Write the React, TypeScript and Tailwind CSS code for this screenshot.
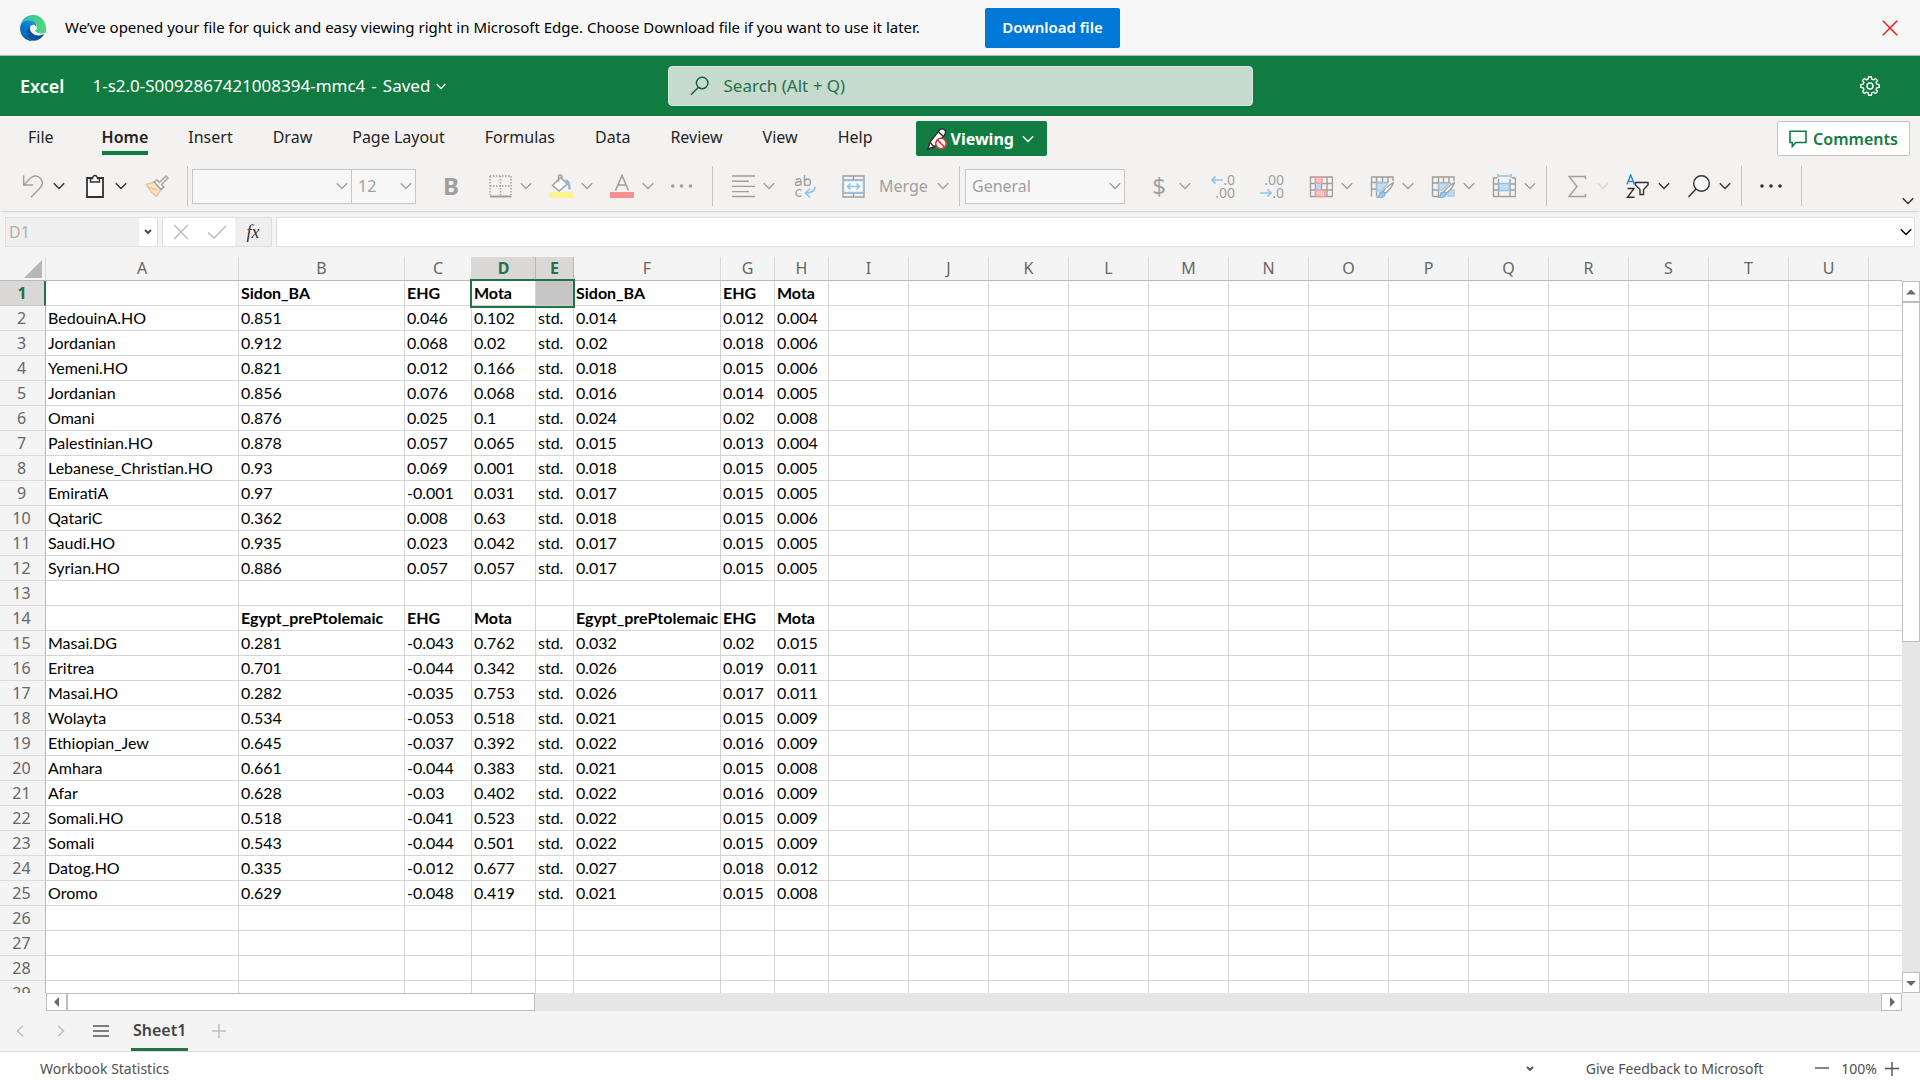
import React from "react";

type IconProps = { children: React.ReactNode; className?: string };

function Icon({ children, className = "text-[#a19f9d]" }: IconProps) {
  return (
    <svg viewBox="0 0 24 24" fill="none" stroke="currentColor" strokeWidth="1.4" aria-hidden="true" className={`h-6 w-6 shrink-0 ${className}`}>
      {children}
    </svg>
  );
}

function Chevron({ className = "text-[#a19f9d]" }: { className?: string }) {
  return (
    <svg viewBox="0 0 12 8" fill="none" stroke="currentColor" strokeWidth="1.4" aria-hidden="true" className={`h-2 w-3 shrink-0 ${className}`}>
      <path d="M.8 1.2 6 6.6 11.2 1.2" />
    </svg>
  );
}

type ToolProps = { label: string; children: React.ReactNode; menu?: boolean; tone?: string; className?: string };

function Tool({ label, children, menu, tone, className = "" }: ToolProps) {
  return (
    <button type="button" aria-label={label} className={`flex h-10 shrink-0 items-center gap-2 ${className}`}>
      {children}
      {menu && <Chevron className={tone} />}
    </button>
  );
}

function Separator({ className = "" }: { className?: string }) {
  return <div className={`h-10 w-px shrink-0 bg-[#c8c6c4] ${className}`} />;
}

function Dropdown({ label, value, className }: { label: string; value: string; className: string }) {
  return (
    <div className={`relative h-[35px] shrink-0 ${className}`}>
      <select aria-label={label} className="h-full w-full appearance-none border border-[#c8c6c4] bg-[#f7f7f7] pl-1.5 text-base text-[#a19f9d]">
        <option>{value}</option>
      </select>
      <span className="pointer-events-none absolute inset-y-0 right-1 flex items-center">
        <Chevron />
      </span>
    </div>
  );
}

function EdgeLogo() {
  return (
    <svg viewBox="0 0 256 256" className="h-[26px] w-[26px] shrink-0" role="img" aria-label="Microsoft Edge">
      <defs>
        <linearGradient id="edge-dark" x1="60" y1="177" x2="240" y2="177" gradientUnits="userSpaceOnUse">
          <stop offset="0" stopColor="#0c59a4" />
          <stop offset="1" stopColor="#114a8b" />
        </linearGradient>
        <linearGradient id="edge-blue" x1="157" y1="96" x2="46" y2="230" gradientUnits="userSpaceOnUse">
          <stop offset="0" stopColor="#1b8fdc" />
          <stop offset=".4" stopColor="#0a7bd0" />
          <stop offset="1" stopColor="#0667b4" />
        </linearGradient>
        <linearGradient id="edge-green" x1="20" y1="80" x2="240" y2="110" gradientUnits="userSpaceOnUse">
          <stop offset="0" stopColor="#2fb6b4" />
          <stop offset=".35" stopColor="#3cc99a" />
          <stop offset="1" stopColor="#4fd67c" />
        </linearGradient>
      </defs>
      <path fill="url(#edge-dark)" d="M231 190a94 94 0 0 1-10 5 102 102 0 0 1-36 6c-47 0-88-32-88-74a31 31 0 0 1 16-27c-43 2-54 46-54 72 0 74 68 81 82 81 8 0 20-2 28-4l1-1a128 128 0 0 0 66-53 4 4 0 0 0-5-5z" />
      <path fill="url(#edge-blue)" d="M106 241a79 79 0 0 1-23-21 81 81 0 0 1 30-120c3-2 8-4 16-4a32 32 0 0 1 25 13 32 32 0 0 1 6 19c0-1 25-80-80-80C36 48 0 90 0 130a130 130 0 0 0 12 56 128 128 0 0 0 157 67 76 76 0 0 1-63-8z" />
      <path fill="url(#edge-green)" d="M152 149c0 1-3 3-3 7 0 4 2 8 7 11 23 16 66 14 66 14a61 61 0 0 0 31-9 64 64 0 0 0 3-44c0-29-10-48-14-56C212 16 169 0 128 0A128 128 0 0 0 0 126c0-40 39-72 84-72 4 0 25 0 44 10 17 9 26 20 32 30a63 63 0 0 1 8 30c0 14-7 22-16 25z" />
    </svg>
  );
}

const tabs = ["File", "Home", "Insert", "Draw", "Page Layout", "Formulas", "Data", "Review", "View", "Help"];

const columns = "ABCDEFGHIJKLMNOPQRSTU".split("");

const columnWidths = [
  "w-[193px]", "w-[166px]", "w-[67px]", "w-[64px]", "w-[38px]", "w-[147px]", "w-[54px]", "w-[54px]",
  "w-20", "w-20", "w-20", "w-20", "w-20", "w-20", "w-20", "w-20", "w-20", "w-20", "w-20", "w-20", "w-20",
];

const cells: string[][] = [
  ["", "Sidon_BA", "EHG", "Mota", "", "Sidon_BA", "EHG", "Mota"],
  ["BedouinA.HO", "0.851", "0.046", "0.102", "std.", "0.014", "0.012", "0.004"],
  ["Jordanian", "0.912", "0.068", "0.02", "std.", "0.02", "0.018", "0.006"],
  ["Yemeni.HO", "0.821", "0.012", "0.166", "std.", "0.018", "0.015", "0.006"],
  ["Jordanian", "0.856", "0.076", "0.068", "std.", "0.016", "0.014", "0.005"],
  ["Omani", "0.876", "0.025", "0.1", "std.", "0.024", "0.02", "0.008"],
  ["Palestinian.HO", "0.878", "0.057", "0.065", "std.", "0.015", "0.013", "0.004"],
  ["Lebanese_Christian.HO", "0.93", "0.069", "0.001", "std.", "0.018", "0.015", "0.005"],
  ["EmiratiA", "0.97", "-0.001", "0.031", "std.", "0.017", "0.015", "0.005"],
  ["QatariC", "0.362", "0.008", "0.63", "std.", "0.018", "0.015", "0.006"],
  ["Saudi.HO", "0.935", "0.023", "0.042", "std.", "0.017", "0.015", "0.005"],
  ["Syrian.HO", "0.886", "0.057", "0.057", "std.", "0.017", "0.015", "0.005"],
  [],
  ["", "Egypt_prePtolemaic", "EHG", "Mota", "", "Egypt_prePtolemaic", "EHG", "Mota"],
  ["Masai.DG", "0.281", "-0.043", "0.762", "std.", "0.032", "0.02", "0.015"],
  ["Eritrea", "0.701", "-0.044", "0.342", "std.", "0.026", "0.019", "0.011"],
  ["Masai.HO", "0.282", "-0.035", "0.753", "std.", "0.026", "0.017", "0.011"],
  ["Wolayta", "0.534", "-0.053", "0.518", "std.", "0.021", "0.015", "0.009"],
  ["Ethiopian_Jew", "0.645", "-0.037", "0.392", "std.", "0.022", "0.016", "0.009"],
  ["Amhara", "0.661", "-0.044", "0.383", "std.", "0.021", "0.015", "0.008"],
  ["Afar", "0.628", "-0.03", "0.402", "std.", "0.022", "0.016", "0.009"],
  ["Somali.HO", "0.518", "-0.041", "0.523", "std.", "0.022", "0.015", "0.009"],
  ["Somali", "0.543", "-0.044", "0.501", "std.", "0.022", "0.015", "0.009"],
  ["Datog.HO", "0.335", "-0.012", "0.677", "std.", "0.027", "0.018", "0.012"],
  ["Oromo", "0.629", "-0.048", "0.419", "std.", "0.021", "0.015", "0.008"],
  [], [], [], [],
];

function Banner() {
  return (
    <div className="flex h-14 shrink-0 items-center border-b border-[#b8b8b8] bg-[#f7f7f7] pr-[22px] pl-5">
      <EdgeLogo />
      <p className="ml-[19px] w-[880px] text-[15px] whitespace-nowrap text-black">
        We’ve opened your file for quick and easy viewing right in Microsoft Edge. Choose Download file if you want to use it later.
      </p>
      <button type="button" className="ml-10 h-10 w-[135px] shrink-0 rounded-xs bg-[#0078d7] text-[15px] font-semibold text-white">
        Download file
      </button>
      <button type="button" aria-label="Close" className="ml-auto text-[#f01818]">
        <svg viewBox="0 0 16 16" fill="none" stroke="currentColor" strokeWidth="1.4" className="h-4 w-4">
          <path d="m.8.8 14.4 14.4M15.2.8.8 15.2" />
        </svg>
      </button>
    </div>
  );
}

function TitleBar() {
  return (
    <header className="grid h-[60px] shrink-0 grid-cols-[1fr_585px_1fr] items-center bg-[#107c41] text-white">
      <div className="flex items-center pl-5">
        <span className="text-lg font-semibold">Excel</span>
        <button type="button" className="ml-7 flex items-center gap-1.5 text-[17px] whitespace-nowrap">
          <span>1-s2.0-S0092867421008394-mmc4</span>
          <span>-</span>
          <span>Saved</span>
          <svg viewBox="0 0 10 7" fill="none" stroke="currentColor" strokeWidth="1.3" className="h-[7px] w-2.5">
            <path d="M.7 1 5 5.6 9.3 1" />
          </svg>
        </button>
      </div>
      <label className="flex h-10 items-center rounded-sm border border-[#d5e6dc] bg-[#c5dbce] pl-[21px] text-[#185c37]">
        <svg viewBox="0 0 20 20" fill="none" stroke="currentColor" strokeWidth="1.4" className="h-5 w-5 shrink-0">
          <circle cx="12.2" cy="7" r="5.8" />
          <path d="M8.2 11.4 1 18.8" />
        </svg>
        <input type="text" placeholder="Search (Alt + Q)" aria-label="Search" className="ml-3.5 w-full bg-transparent text-[17px] outline-none placeholder:text-[#2a6f49]" />
      </label>
      <button type="button" aria-label="Settings" className="mr-10 justify-self-end">
        <svg viewBox="0 0 20 20" fill="none" stroke="currentColor" strokeWidth="1.4" strokeLinejoin="round" className="h-5 w-5">
          <path d="M8.2 3.1 8.6.8h2.8l.4 2.3 1.8.8 1.9-1.4 2 2-1.4 1.9.8 1.8 2.3.4v2.8l-2.3.4-.8 1.8 1.4 1.9-2 2-1.9-1.4-1.8.8-.4 2.3H8.6l-.4-2.3-1.8-.8-1.9 1.4-2-2 1.4-1.9-.8-1.8-2.3-.4V8.6l2.3-.4.8-1.8-1.4-1.9 2-2 1.9 1.4z" />
          <circle cx="10" cy="10" r="3" />
        </svg>
      </button>
    </header>
  );
}

function TabStrip() {
  return (
    <div className="flex items-start pt-[5px] pr-2.5 pl-7">
      <nav className="flex gap-10">
        {tabs.map((tab) => (
          <button
            key={tab}
            type="button"
            className={
              tab === "Home"
                ? "ml-2 border-b-4 border-[#107c41] pt-0.5 text-base leading-7 font-semibold text-[#252423]"
                : "border-b-4 border-transparent pt-0.5 text-base leading-7 whitespace-nowrap text-[#252423]"
            }
          >
            {tab}
          </button>
        ))}
      </nav>
      <button type="button" className="ml-11 flex h-[35px] w-[131px] items-center rounded-xs bg-[#107c41] pl-2.5 text-white">
        <svg viewBox="0 0 22 24" className="h-6 w-[22px]" aria-hidden="true">
          <path d="M2 22 4 15 14 2.5q3-2 5.500 1.500Q20 6 18.500 8L8 20z" fill="#fff" stroke="#333" strokeWidth="1.500" />
          <path d="m4 15 4 5M12.500 5l4.500 4" stroke="#333" strokeWidth="1.500" />
          <circle cx="15" cy="16.500" r="5.200" fill="#fff" stroke="#d83b3b" strokeWidth="1.600" />
          <path d="m11.400 12.900 7.200 7.200" stroke="#d83b3b" strokeWidth="1.600" />
        </svg>
        <span className="ml-0.5 text-base font-bold">Viewing</span>
        <Chevron className="ml-2 text-white" />
      </button>
      <button type="button" className="ml-auto flex h-[35px] w-[133px] items-center justify-center gap-1.5 rounded-xs border border-[#c8c6c4] bg-white text-base font-semibold text-[#107c41]">
        <svg viewBox="0 0 18 18" fill="none" stroke="currentColor" strokeWidth="1.600" className="h-[18px] w-[18px] shrink-0" aria-hidden="true">
          <path d="M1 1.300h16v11.200H6.800L3.300 16.500v-4H1z" />
        </svg>
        <span>Comments</span>
      </button>
    </div>
  );
}

const dark = "text-[#323130]";

function Toolbar() {
  return (
    <div className="flex items-center pt-2.5 pr-1.5 pb-[5px] pl-[21px]">
      <div className="flex items-center gap-[18px]">
        <Tool label="Undo" menu tone={dark}>
          <Icon>
            <path d="M2.700 1.500V11h9.500M3 10.800l6-6.300C12.500 1 17 1.500 19.500 4.500S22 11 19 14L10 23.200" />
          </Icon>
        </Tool>
        <Tool label="Paste" menu tone={dark}>
          <Icon className={dark}>
            <path fill="#fafafa" d="M4 4h16v19H4z" strokeWidth="1.800" />
            <path fill="#fafafa" d="M7.500 8V4.500H9.500Q10 1.500 12 1.500T14.500 4.500H16.500V8z" />
          </Icon>
        </Tool>
        <Tool label="Format Painter">
          <Icon>
            <path fill="#fbe3cd" stroke="#f0c197" d="M1.500 10.500 9 8l7 7.500-4.500 6.700Q5 18 1.500 10.500zM3 13l9 3" />
            <path fill="#fafafa" d="m9 8 3-2 2.500 2.500 6.500-6.500 2 2-6.500 6.500L19 13l-3 2.500z" />
          </Icon>
        </Tool>
        <Separator />
      </div>
      <div className="ml-1 flex">
        <Dropdown label="Font" value="" className="w-40" />
        <Dropdown label="Font size" value="12" className="-ml-px w-[65px]" />
      </div>
      <Tool label="Bold" className="ml-[23px] w-6 justify-center text-2xl font-bold text-[#a19f9d]">B</Tool>
      <div className="ml-[25px] flex items-center gap-[17px]">
        <Tool label="Borders" menu>
          <Icon>
            <path strokeDasharray="1.500 1.500" d="M2 2h21M2 12h21M2 2v19M12.500 2v19M23 2v19" />
            <path d="M2 22.500h21.500" strokeWidth="2" />
          </Icon>
        </Tool>
        <Tool label="Fill Color" menu>
          <Icon>
            <path fill="#fafafa" d="m3.500 11.500 8-8 7 6.500-8.500 7z" />
            <path d="M9.500 7.500V2q2-2.500 3.500 0v3.500" />
            <path d="M16.500 6.500q4 0 4 9" stroke="#8cbbe0" strokeWidth="2.500" />
            <path fill="#fbf58f" stroke="none" d="M0 18h24v6H0z" />
          </Icon>
        </Tool>
        <Tool label="Font Color" menu>
          <Icon>
            <path d="m5.500 16.500 6.500-15 6.500 15M8 11h8" strokeWidth="1.600" />
            <path fill="#f98f8f" stroke="none" d="M0 18h24v6H0z" />
          </Icon>
        </Tool>
        <Tool label="More font options">
          <Icon>
            <g fill="currentColor" stroke="none"><circle cx="1.800" cy="12" r="1.800" /><circle cx="10.500" cy="12" r="1.800" /><circle cx="19.500" cy="12" r="1.800" /></g>
          </Icon>
        </Tool>
        <Separator />
      </div>
      <Tool label="Align" menu className="ml-[18px]">
        <Icon><path d="M1 2h23M1 7.200h17M1 12.400h23M1 17.600h17M1 22.500h23" /></Icon>
      </Tool>
      <Tool label="Wrap Text" className="ml-[18px]">
        <Icon>
          <path d="M3 5.500Q8 3.500 8 7v4.500M8 7.500Q2.500 7.500 2.500 10t5.500.5M11.500 1v10.500M11.500 8q0-3 3-3t3 3.300-3 3.300-3-3.300M8.500 16q-5.500-1.500-5.500 3t5.500 3" />
          <path d="M22 13q0 6-9.500 6m4.500-4.500-4.500 4.500 4.500 4.500" stroke="#8fc5e8" strokeWidth="1.700" />
        </Icon>
      </Tool>
      <Tool label="Merge" menu className="ml-6">
        <Icon>
          <path d="M2 2h21v21H2zM12.500 2v4M12.500 18v5M2 6h21M2 19h21" />
          <path fill="#fafafa" stroke="#8fc5e8" d="M2.500 6.500h20v12h-20z" />
          <path d="M6.500 12.500h12M9.500 9.500l-3 3 3 3M15.500 9.500l3 3-3 3" stroke="#8fc5e8" strokeWidth="1.600" />
        </Icon>
        <span className="ml-1.5 w-[50px] text-left text-base text-[#a19f9d]">Merge</span>
      </Tool>
      <Separator className="ml-2.5" />
      <Dropdown label="Number Format" value="General" className="ml-[5px] w-40" />
      <Tool label="Currency" menu className="ml-[22px] text-2xl text-[#a19f9d]">
        <span className="w-6 text-center">$</span>
      </Tool>
      <Tool label="Increase Decimal" className="ml-5 w-6 justify-end">
        <span className="flex flex-col items-end text-sm leading-[13px] text-[#a19f9d]">
          <span className="flex items-center">
            <svg viewBox="0 0 12 8" fill="none" stroke="#8fc5e8" strokeWidth="1.600" className="h-2 w-3"><path d="M1 4h11M4.500.500 1 4l3.500 3.500" /></svg>
            .0
          </span>
          <span>.00</span>
        </span>
      </Tool>
      <Tool label="Decrease Decimal" className="ml-[25px] w-6 justify-end">
        <span className="flex flex-col items-end text-sm leading-[13px] text-[#a19f9d]">
          <span>.00</span>
          <span className="flex items-center">
            <svg viewBox="0 0 12 8" fill="none" stroke="#8fc5e8" strokeWidth="1.600" className="h-2 w-3"><path d="M0 4h11M7.500.500 11 4 7.500 7.500" /></svg>
            .0
          </span>
        </span>
      </Tool>
      <div className="ml-[25px] flex items-center gap-[17px]">
        <Tool label="Conditional Formatting" menu>
          <Icon>
            <path d="M1.500 3h22v19.500h-22zM6.500 3v19.500M12.500 3v19.500M18 3v19.500M1.500 9.500h22M1.500 16h22" />
            <path fill="#fbc5c5" stroke="#f19a9a" d="M6.500 3H13v6.500H6.500zM6.500 16h9.500v6.500H6.500z" />
            <path fill="#b9dbf3" stroke="none" d="M7 10h5v5.500H7z" />
          </Icon>
        </Tool>
        <Tool label="Format As Table" menu>
          <Icon>
            <path d="M1.500 22.500V3h21.500v4M6.500 3v19.500M1.500 8.500H18M1.500 15h6M12.500 3v5.500M18 3v5.500" />
            <path fill="#c3ddf3" stroke="#a5cbe8" d="M7 9h11l-7 8H7z" />
            <path fill="#fafafa" d="M23.500 8.500q-7 4-10.500 9l2 2q6-4.500 8.500-11z" />
            <path fill="#a5cbe8" stroke="#7fb2dc" d="M12.500 18q3.500 1 2 3.500T6.500 24q3-1.500 3-3.500t3-2.500z" />
          </Icon>
        </Tool>
        <Tool label="Cell Styles" menu>
          <Icon>
            <path d="M1.500 22.500V3h21.500v4M7.500 3v19.500M1.500 9H20M1.500 16h6M12.500 3v6M18 3v6M1.500 22.500h6" />
            <path fill="#c3ddf3" stroke="#a5cbe8" d="M8 9.500h10l-7 6.500H8zM17 16h6v6h-6z" />
            <path fill="#fafafa" d="M23.500 8.500q-7 4-10.500 9l2 2q6-4.500 8.500-11z" />
            <path fill="#a5cbe8" stroke="#7fb2dc" d="M12.500 18q3.500 1 2 3.500T6.500 24q3-1.500 3-3.500t3-2.500z" />
          </Icon>
        </Tool>
        <Tool label="Insert Cells" menu>
          <Icon>
            <path d="M5 4H1.500v18.500h22V4H20M6.500 5v17.500M18 5v17.500M1.500 10h22M1.500 16h22" />
            <path fill="#c3ddf3" stroke="#8fc5e8" d="M7 9.500h10.500v7H7z" />
            <path d="M6 2h13M6 0v4M19 0v4" stroke="#8fc5e8" strokeWidth="1.600" />
          </Icon>
        </Tool>
      </div>
      <Separator className="ml-2.5" />
      <Tool label="AutoSum" menu tone="text-[#dad8d6]" className="ml-[18px]">
        <Icon><path d="M20.500 5V2.500H4l8 10-8 10h16.500V20" /></Icon>
      </Tool>
      <Tool label="Sort and Filter" menu tone={dark} className="ml-[17px]">
        <Icon className={dark}>
          <path d="m1 10.500 3.700-9.500 3.700 9.500M2.300 7.500h4.800" stroke="#1e88d2" />
          <path d="M1.500 14.500h6.500l-6.500 8.800h7" />
          <path fill="#fafafa" d="M9.500 8.500H22V11l-4.500 4.500v5h-3.500v-5L9.500 11z" />
        </Icon>
      </Tool>
      <Tool label="Find" menu tone={dark} className="ml-[17px]">
        <Icon className={dark}>
          <circle cx="14.500" cy="9.500" r="7.800" fill="#fafafa" />
          <path d="M9 15 1.500 23" />
        </Icon>
      </Tool>
      <Separator className="ml-2.5" />
      <Tool label="More Options" className="ml-[17px]">
        <Icon className={dark}>
          <g fill="currentColor" stroke="none"><circle cx="3" cy="12" r="1.800" /><circle cx="12" cy="12" r="1.800" /><circle cx="21" cy="12" r="1.800" /></g>
        </Icon>
      </Tool>
      <Separator className="ml-[18px]" />
      <button type="button" aria-label="Ribbon display options" className="ml-auto self-end pb-px">
        <Chevron className={dark} />
      </button>
    </div>
  );
}

function FormulaBar() {
  return (
    <div className="flex h-[46px] shrink-0 items-start pt-1.5 pr-[5px] pl-[5px]">
      <div className="flex h-[30px] w-[153px] shrink-0 border border-[#e1dfdd] bg-[#efefef]">
        <input aria-label="Name Box" defaultValue="D1" className="w-0 flex-1 pl-[3px] text-base text-[#b3b0ad] outline-none" />
        <button type="button" aria-label="Name Box options" className="flex w-[18px] items-center justify-center bg-white text-[#444]">
          <svg viewBox="0 0 8 6" fill="none" stroke="currentColor" strokeWidth="1.800" className="h-1.5 w-2"><path d="m1 1 3 3 3-3" /></svg>
        </button>
      </div>
      <div className="ml-1 flex h-[30px] shrink-0 border border-[#e1dfdd] bg-white">
        <button type="button" aria-label="Cancel" className="flex w-9 items-center justify-center text-[#b8b6b4]">
          <svg viewBox="0 0 16 16" fill="none" stroke="currentColor" strokeWidth="1.300" className="h-4 w-4"><path d="m1 1 14 14M15 1 1 15" /></svg>
        </button>
        <button type="button" aria-label="Enter" className="flex w-9 items-center justify-center text-[#b8b6b4]">
          <svg viewBox="0 0 20 14" fill="none" stroke="currentColor" strokeWidth="1.300" className="h-3.5 w-5"><path d="m1 7.500 6 5.500L19 1" /></svg>
        </button>
        <button type="button" aria-label="Insert Function" className="w-9 bg-[#efefef] font-['Liberation_Serif',serif] text-lg leading-6 text-[#323130] italic">
          fx
        </button>
      </div>
      <div className="ml-1 flex h-[30px] min-w-0 flex-1 items-center border border-[#e1dfdd] bg-white pr-0.5">
        <input aria-label="Formula Bar" className="min-w-0 flex-1 pl-1 text-base outline-none" />
        <button type="button" aria-label="Expand Formula Bar"><Chevron className="text-black" /></button>
      </div>
    </div>
  );
}

function cellClass(row: number, col: number) {
  if (row === 0 && col === 4) return "h-[25px] overflow-hidden border-r border-b border-[#d4d4d4] bg-[#c6c6c6] p-0 pl-0.5 whitespace-nowrap";
  if (row === 0 && col === 3) return "relative h-[25px] border-r border-b border-[#d4d4d4] p-0 pl-0.5 font-bold whitespace-nowrap";
  if (row === 0 || row === 13) return "h-[25px] overflow-hidden border-r border-b border-[#d4d4d4] p-0 pl-0.5 font-bold whitespace-nowrap";
  return "h-[25px] overflow-hidden border-r border-b border-[#d4d4d4] p-0 pl-0.5 whitespace-nowrap";
}

function Grid() {
  return (
    <table className="w-full table-fixed border-separate border-spacing-0 bg-white">
      <colgroup>
        <col className="w-[46px]" />
        {columnWidths.map((width, i) => <col key={i} className={width} />)}
        <col />
      </colgroup>
      <thead>
        <tr className="bg-[#f4f4f4] text-base leading-[23px] text-[#666]">
          <th scope="col" aria-label="Select all" className="h-6 border-r border-b border-r-[#d8d8d8] border-b-[#b8b8b8] p-0">
            <svg viewBox="0 0 18 18" className="mr-[3px] ml-auto h-[18px] w-[18px]" aria-hidden="true"><path d="M18 0v18H0z" fill="#b5b5b5" /></svg>
          </th>
          {columns.map((name, i) => (
            <th
              key={name}
              scope="col"
              className={
                i === 3 || i === 4
                  ? "h-6 border-r border-b border-[#b8b8b8] bg-[#d9d8d6] p-0 font-bold text-[#217346]"
                  : "h-6 border-r border-b border-r-[#d8d8d8] border-b-[#b8b8b8] p-0 font-normal"
              }
            >
              {name}
            </th>
          ))}
          <th className="h-6 border-b border-[#b8b8b8] p-0" />
        </tr>
      </thead>
      <tbody className="font-[Lato,sans-serif] text-base leading-6 text-black">
        {cells.map((row, r) => (
          <tr key={r}>
            <th
              scope="row"
              className={
                r === 0
                  ? "h-[25px] border-r-2 border-b border-r-[#217346] border-b-[#c8c8c8] bg-[#d9d8d6] p-0 font-['Noto_Sans',sans-serif] font-bold text-[#217346]"
                  : "h-[25px] border-r border-b border-r-[#b8b8b8] border-b-[#dcdcdc] bg-[#f4f4f4] p-0 pr-0.5 font-['Noto_Sans',sans-serif] font-normal text-[#666]"
              }
            >
              {r + 1}
            </th>
            {columns.map((name, c) => (
              <td key={name} className={cellClass(r, c)}>
                {row[c]}
                {r === 0 && c === 3 && (
                  <span className="pointer-events-none absolute -top-0.5 -left-0.5 z-10 h-[29px] w-[105px] border-2 border-[#217346]" />
                )}
              </td>
            ))}
            <td className="border-b border-[#d4d4d4] p-0" />
          </tr>
        ))}
      </tbody>
    </table>
  );
}

function Arrow({ path }: { path: string }) {
  return <svg viewBox="0 0 10 10" fill="#6b6b6b" aria-hidden="true" className="h-2.5 w-2.5"><path d={path} /></svg>;
}

function Workspace() {
  return (
    <div className="flex min-h-0 flex-1 flex-col">
      <div className="flex min-h-0 flex-1">
        <div className="min-w-0 flex-1 overflow-hidden">
          <Grid />
        </div>
        <div className="mt-6 flex w-[18px] shrink-0 flex-col bg-[#e6e6e6]">
          <button type="button" aria-label="Scroll up" className="flex h-[21px] items-center justify-center border border-[#bcbfc2] bg-white"><Arrow path="M0 7.500 5 2.500l5 5z" /></button>
          <div className="h-[340px] border border-[#bcbfc2] bg-white" />
          <button type="button" aria-label="Scroll down" className="mt-auto flex h-[21px] items-center justify-center border border-[#bcbfc2] bg-white"><Arrow path="M0 3h10L5 8z" /></button>
        </div>
      </div>
      <div className="mr-[18px] ml-[46px] flex h-[18px] shrink-0 bg-[#e6e6e6]">
        <button type="button" aria-label="Scroll left" className="flex w-[21px] items-center justify-center border border-[#bcbfc2] bg-white"><Arrow path="M7 0v10L2 5z" /></button>
        <div className="w-[468px] border border-[#bcbfc2] bg-white" />
        <button type="button" aria-label="Scroll right" className="ml-auto flex w-[21px] items-center justify-center border border-[#bcbfc2] bg-white"><Arrow path="M3 0v10l5-5z" /></button>
      </div>
    </div>
  );
}

function SheetBar() {
  return (
    <div className="flex h-[41px] shrink-0 items-center border-b border-[#dcdcdc] pl-4 text-[#bdbdbd]">
      <button type="button" aria-label="Previous sheet">
        <svg viewBox="0 0 8 12" fill="none" stroke="currentColor" strokeWidth="1.500" className="h-3 w-2"><path d="M7 .700 1.500 6 7 11.300" /></svg>
      </button>
      <button type="button" aria-label="Next sheet" className="ml-[33px]">
        <svg viewBox="0 0 8 12" fill="none" stroke="currentColor" strokeWidth="1.500" className="h-3 w-2"><path d="M1 .700 6.500 6 1 11.300" /></svg>
      </button>
      <button type="button" aria-label="All sheets" className="ml-7 text-[#555]">
        <svg viewBox="0 0 16 12" fill="none" stroke="currentColor" strokeWidth="1.500" className="h-3 w-4"><path d="M0 1h16M0 6h16M0 11h16" /></svg>
      </button>
      <button type="button" className="ml-[22px] h-10 border-b-3 border-[#217346] px-0.5 text-base font-semibold text-[#444]">Sheet1</button>
      <button type="button" aria-label="New sheet" className="ml-6">
        <svg viewBox="0 0 14 14" fill="none" stroke="currentColor" strokeWidth="1.500" className="h-3.5 w-3.5"><path d="M7 0v14M0 7h14" /></svg>
      </button>
    </div>
  );
}

function StatusBar() {
  return (
    <footer className="flex h-7 shrink-0 items-center bg-white pt-1.5 pr-[21px] pl-10 text-sm text-[#505050]">
      <button type="button" className="leading-5">Workbook Statistics</button>
      <button type="button" aria-label="Status options" className="ml-auto">
        <svg viewBox="0 0 8 6" fill="none" stroke="currentColor" strokeWidth="1.800" className="h-1.5 w-2"><path d="m1 1 3 3 3-3" /></svg>
      </button>
      <a href="#feedback" className="ml-[52px] leading-5">Give Feedback to Microsoft</a>
      <button type="button" aria-label="Zoom out" className="ml-[52px]">
        <svg viewBox="0 0 14 14" fill="none" stroke="currentColor" strokeWidth="1.400" className="h-3.5 w-3.5"><path d="M0 6h14" /></svg>
      </button>
      <span className="ml-3 leading-5">100%</span>
      <button type="button" aria-label="Zoom in" className="ml-2">
        <svg viewBox="0 0 14 14" fill="none" stroke="currentColor" strokeWidth="1.400" className="h-3.5 w-3.5"><path d="M7 0v14M0 6.500h14" /></svg>
      </button>
    </footer>
  );
}

export default function App() {
  return (
    <div className="flex h-screen flex-col overflow-hidden bg-[#f4f4f4] font-['Noto_Sans',sans-serif]">
      <Banner />
      <TitleBar />
      <div className="z-20 shrink-0 bg-[#f3f2f1] shadow">
        <TabStrip />
        <Toolbar />
      </div>
      <FormulaBar />
      <Workspace />
      <SheetBar />
      <StatusBar />
    </div>
  );
}
